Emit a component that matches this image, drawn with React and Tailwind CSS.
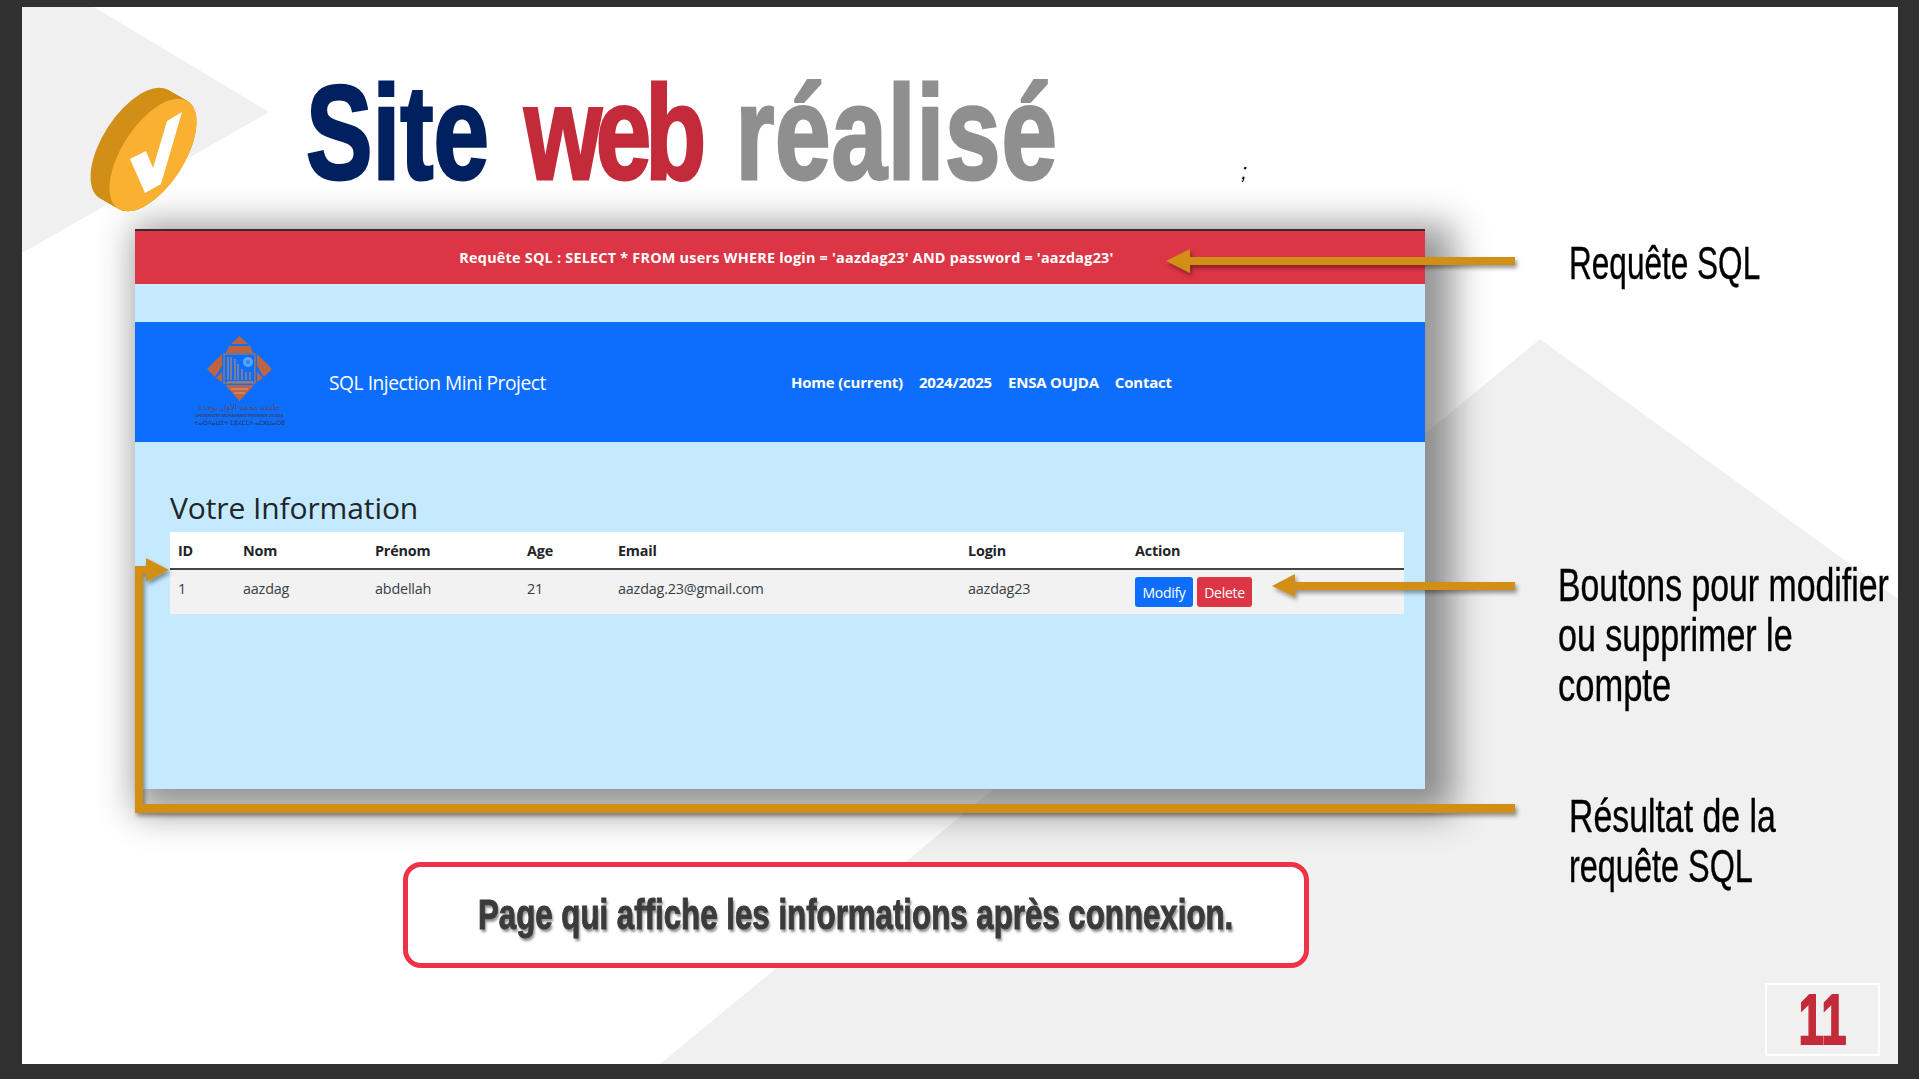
import React from "react";

const ui = "font-['Open_Sans','Liberation_Sans',sans-serif]";
const slideFont = "font-['Liberation_Sans',sans-serif]";

const columns = [
  { label: "ID", width: "w-[65px]", value: "1" },
  { label: "Nom", width: "w-[132px]", value: "aazdag" },
  { label: "Prénom", width: "w-[152px]", value: "abdellah" },
  { label: "Age", width: "w-[91px]", value: "21" },
  { label: "Email", width: "w-[350px]", value: "aazdag.23@gmail.com" },
  { label: "Login", width: "w-[167px]", value: "aazdag23" },
];

// slide backdrop, in screen coordinates
function Backdrop() {
  return (
    <svg className="absolute inset-0 w-full h-full" viewBox="22 7 1876 1057">
      <polygon points="22,7 94,7 269,112 22,253" fill="#f0f0f0" />
      <polygon points="1540,339 1898,599 1898,1064 660,1064" fill="#f0f0f0" />
    </svg>
  );
}

function CheckBadge() {
  const steps = Array.from({ length: 20 }, (_, i) => i / 19);
  return (
    <svg className="absolute inset-0 w-full h-full" viewBox="22 7 1876 1057">
      {steps.map((t) => (
        <ellipse
          key={t}
          cx={134 + 19 * t}
          cy={144 + 11 * t}
          rx="64"
          ry="31"
          transform={`rotate(-57 ${134 + 19 * t} ${144 + 11 * t})`}
          fill="#d18f17"
        />
      ))}
      <ellipse cx="153" cy="155" rx="64" ry="31" transform="rotate(-57 153 155)" fill="#fab132" />
      <polygon points="182,112 167,121 153,168 146,151 130,159 145,193 161,184" fill="#fff" />
    </svg>
  );
}

// orange pointers lying over the screenshot
function Arrows() {
  return (
    <svg className="absolute inset-0 w-full h-full pointer-events-none" viewBox="22 7 1876 1057">
      <defs>
        <filter id="soft" x="-5%" y="-20%" width="110%" height="140%">
          <feDropShadow dx="2" dy="3" stdDeviation="2" floodColor="#000" floodOpacity="0.4" />
        </filter>
      </defs>
      <g fill="#d18f17" filter="url(#soft)">
        <polygon points="1166,261 1190,249 1190,257 1515,257 1515,265 1190,265 1190,273" />
        <polygon points="1272,586 1295,574 1295,582 1515,582 1515,590 1295,590 1295,597" />
        <polygon points="135,813 135,566 146,566 146,558 169,570 146,582 146,574 143,574 143,804 1515,804 1515,813" />
      </g>
    </svg>
  );
}

function UniversityLogo() {
  return (
    <div className="w-[85px] -mt-[3px] flex flex-col items-center">
      <svg width="65" height="65" viewBox="0 0 65 65">
        <g fill="#bd6443">
          <polygon points="32.5,0 41,8 24,8" />
          <polygon points="22,10 43,10 46,17 19,17" />
          <polygon points="15,18 0,33 8,41 15,30" />
          <polygon points="50,18 65,33 57,41 50,30" />
          <polygon points="15,36 15,46 9,42" />
          <polygon points="50,36 50,46 56,42" />
          <polygon points="18,49 47,49 32.5,65" />
        </g>
        <rect x="17" y="18" width="31" height="29" fill="none" stroke="#a9765f" strokeWidth="1.2" />
        <path
          d="M21 21v23M24 21v23M28 23v21M31 28v16M35 33v11M39 36v8M43 36v8M20 46h26"
          stroke="#a88472"
          strokeWidth="1.4"
          fill="none"
        />
        <path d="M24 53h17M27 57h11" stroke="#e0a080" strokeWidth="1.2" fill="none" />
        <circle cx="41" cy="26" r="5" fill="#5aa6f5" />
        <circle cx="41" cy="26" r="2" fill="#2f7ff7" />
      </svg>
      <span className="mt-[2px] text-[8px] leading-[9px] text-[#5b4a5c] font-['DejaVu_Sans',sans-serif] whitespace-nowrap">
        جامعة محمد الأول بوجدة
      </span>
      <span className="text-[4.2px] leading-[7px] font-bold text-[#3d3f63] font-['Liberation_Sans',sans-serif] whitespace-nowrap">
        UNIVERSITE MOHAMMED PREMIER OUJDA
      </span>
      <span className="text-[6px] leading-[7px] text-[#2c3158] font-['DejaVu_Sans',sans-serif] whitespace-nowrap">
        ⵜⴰⵙⴷⴰⵡⵉⵜ ⵎⵓⵃⵎⵎⴷ ⴰⵎⵣⵡⴰⵔⵓ
      </span>
    </div>
  );
}

function SitePage() {
  return (
    <div
      className={`ml-[113px] w-[1290px] h-[560px] bg-[#c5eaff] flex flex-col shadow-[14px_10px_34px_14px_rgba(0,0,0,0.42)] ${ui}`}
    >
      <div className="h-[55px] bg-[#dc3545] border-t-2 border-[#3a2a2e] flex items-center justify-center text-white text-[14.4px] font-bold tracking-[0.23px]">
        <span className="ml-[13px]">
          Requête SQL : SELECT * FROM users WHERE login = 'aazdag23' AND password = 'aazdag23'
        </span>
      </div>

      <nav className="mt-[38px] h-[120px] bg-[#0d6efd] flex items-center text-white">
        <div className="ml-[62px] w-[132px]">
          <UniversityLogo />
        </div>
        <span className="pt-[2px] text-[19.2px] tracking-[-0.45px]">SQL Injection Mini Project</span>
        <div className="ml-[245px] flex gap-4 text-[15px] font-bold tracking-[-0.2px]">
          <span>Home (current)</span>
          <span>2024/2025</span>
          <span>ENSA OUJDA</span>
          <span>Contact</span>
        </div>
      </nav>

      <div className="pl-[35px] pt-[44px]">
        <h2 className="h-[46px] text-[30px] leading-[44px] text-[#212529] font-medium tracking-[-0.1px]">
          Votre Information
        </h2>
        <table className="w-[1234px] table-fixed text-[14.4px] tracking-[-0.2px] text-[#212529]">
          <thead className="bg-white">
            <tr className="h-[37px] border-b-2 border-[#444]">
              {columns.map((col) => (
                <th key={col.label} className={`${col.width} px-2 pt-[2px] text-left font-bold`}>
                  {col.label}
                </th>
              ))}
              <th className="px-2 pt-[2px] text-left font-bold">Action</th>
            </tr>
          </thead>
          <tbody className="bg-[#f2f2f2]">
            <tr className="h-[45px]">
              {columns.map((col) => (
                <td key={col.label} className="px-2 pb-[6px] text-[#3a3f44]">
                  {col.value}
                </td>
              ))}
              <td className="px-2">
                <div className="flex gap-[4px] text-white text-[14px] tracking-[-0.3px]">
                  <button className="w-[58px] h-[30px] bg-[#0d6efd] rounded-[3px]">Modify</button>
                  <button className="w-[55px] h-[30px] bg-[#dc3545] rounded-[3px]">Delete</button>
                </div>
              </td>
            </tr>
          </tbody>
        </table>
      </div>
    </div>
  );
}

function Note({ className, children }) {
  return (
    <div
      className={`absolute ${slideFont} text-[46px] leading-[50px] text-black whitespace-nowrap [-webkit-text-stroke:0.4px_currentColor] ${className}`}
    >
      {children}
    </div>
  );
}

export default function App() {
  return (
    <div className="w-[1919px] h-[1079px] bg-[#303030] pt-[7px] pl-[22px] overflow-hidden">
      <div className="relative w-[1876px] h-[1057px] bg-white overflow-hidden">
        <Backdrop />

        <div className="relative flex flex-col h-full">
          <h1
            className={`ml-[284px] mt-[42px] h-[180px] text-[133px] leading-[168px] font-bold whitespace-nowrap origin-left scale-x-[.75] [-webkit-text-stroke:3px_currentColor] ${slideFont}`}
          >
            <span className="text-[#00205f]">Site</span>{" "}
            <span className="ml-[10px] tracking-[-8px] text-[#c32b3a]">web</span>{" "}
            <span className="ml-[10px] tracking-[1.2px] text-[#8f8f8f]">réalisé</span>
          </h1>

          <SitePage />

          <div className="ml-[381px] mt-[73px] w-[906px] h-[106px] bg-white border-[5px] border-[#ee3248] rounded-[18px] flex items-center justify-center">
            <span
              className={`-mt-[2px] text-[42px] font-bold text-[#3b3b3b] whitespace-nowrap scale-x-[.744] [-webkit-text-stroke:1px_currentColor] [text-shadow:2px_3px_3px_rgba(0,0,0,0.45)] ${slideFont}`}
            >
              Page qui affiche les informations après connexion.
            </span>
          </div>
        </div>

        <CheckBadge />
        <Arrows />

        <span className="absolute left-[1219px] top-[148px] text-[22px] italic text-black font-['Liberation_Sans',sans-serif]">;</span>

        <Note className="left-[1547px] top-[231px]">
          <div className="origin-left scale-x-[.686]">Requête SQL</div>
        </Note>
        <Note className="left-[1536px] top-[553px]">
          <div className="origin-left scale-x-[.735]">Boutons pour modifier</div>
          <div className="origin-left scale-x-[.74]">ou supprimer le</div>
          <div className="origin-left scale-x-[.75]">compte</div>
        </Note>
        <Note className="left-[1547px] top-[784px]">
          <div className="origin-left scale-x-[.735]">Résultat de la</div>
          <div className="origin-left scale-x-[.705]">requête SQL</div>
        </Note>

        <div className="absolute left-[1743px] top-[976px] w-[115px] h-[73px] border-2 border-white flex items-center justify-center">
          <span
            className={`text-[71px] leading-none font-bold text-[#c32b3a] scale-x-[.64] [-webkit-text-stroke:2px_currentColor] ${slideFont}`}
          >
            11
          </span>
        </div>
      </div>
    </div>
  );
}
